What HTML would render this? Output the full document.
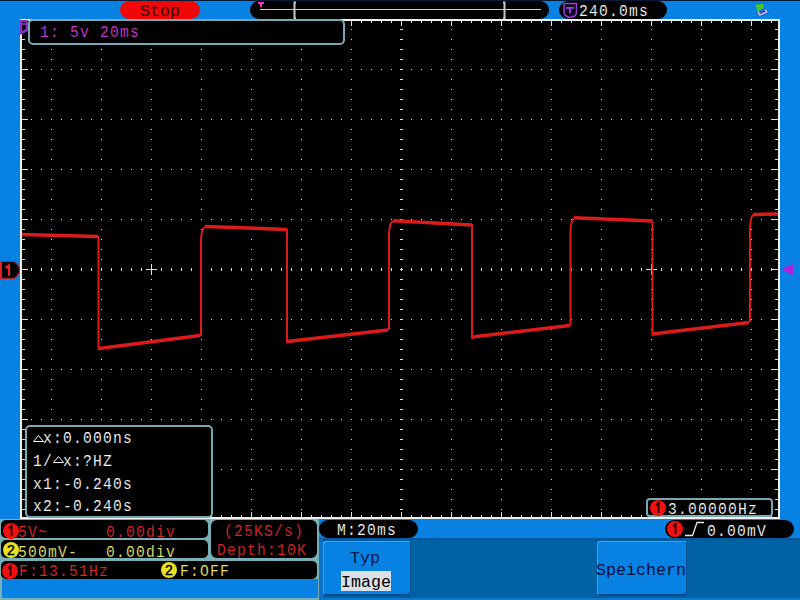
<!DOCTYPE html>
<html><head><meta charset="utf-8"><style>
html,body{margin:0;padding:0;width:800px;height:600px;overflow:hidden;background:#0882e2;}
.a{position:absolute;}
.t{position:absolute;font-family:"Liberation Mono",monospace;font-size:16.67px;line-height:20px;white-space:pre;transform:scaleX(0.88);transform-origin:0 0;letter-spacing:1.364px;}
</style></head><body>
<div class="a" style="left:0px;top:0px;width:800px;height:1px;background:#041838;"></div>
<svg width="800" height="600" style="position:absolute;left:0;top:0" shape-rendering="crispEdges"><rect x="20" y="19" width="760" height="500" fill="#000"/><g stroke="#e0e0e0" stroke-width="1" stroke-dasharray="1 9"><line x1="31" y1="69.5" x2="778" y2="69.5"/><line x1="31" y1="119.5" x2="778" y2="119.5"/><line x1="31" y1="169.5" x2="778" y2="169.5"/><line x1="31" y1="219.5" x2="778" y2="219.5"/><line x1="31" y1="319.5" x2="778" y2="319.5"/><line x1="31" y1="369.5" x2="778" y2="369.5"/><line x1="31" y1="419.5" x2="778" y2="419.5"/><line x1="31" y1="469.5" x2="778" y2="469.5"/><line x1="51.5" y1="29" x2="51.5" y2="517"/><line x1="101.5" y1="29" x2="101.5" y2="517"/><line x1="151.5" y1="29" x2="151.5" y2="517"/><line x1="201.5" y1="29" x2="201.5" y2="517"/><line x1="251.5" y1="29" x2="251.5" y2="517"/><line x1="301.5" y1="29" x2="301.5" y2="517"/><line x1="351.5" y1="29" x2="351.5" y2="517"/><line x1="451.5" y1="29" x2="451.5" y2="517"/><line x1="501.5" y1="29" x2="501.5" y2="517"/><line x1="551.5" y1="29" x2="551.5" y2="517"/><line x1="601.5" y1="29" x2="601.5" y2="517"/><line x1="651.5" y1="29" x2="651.5" y2="517"/><line x1="701.5" y1="29" x2="701.5" y2="517"/><line x1="751.5" y1="29" x2="751.5" y2="517"/></g><line x1="31" y1="269.5" x2="778" y2="269.5" stroke="#e0e0e0" stroke-width="3" stroke-dasharray="1 9"/><line x1="401.5" y1="29" x2="401.5" y2="517" stroke="#e0e0e0" stroke-width="3" stroke-dasharray="1 9"/><path fill="#e0e0e0" d="M146 269h11v1h-11z M151 264h1v11h-1z M646 269h11v1h-11z M651 264h1v11h-1z M400 269h3v1h-3z M401 268h1v3h-1z"/><path fill="#e0e0e0" d="M22 29h3v1h-3z M775 29h3v1h-3z M22 39h3v1h-3z M775 39h3v1h-3z M22 49h3v1h-3z M775 49h3v1h-3z M22 59h3v1h-3z M775 59h3v1h-3z M22 69h6v1h-6z M772 69h6v1h-6z M22 79h3v1h-3z M775 79h3v1h-3z M22 89h3v1h-3z M775 89h3v1h-3z M22 99h3v1h-3z M775 99h3v1h-3z M22 109h3v1h-3z M775 109h3v1h-3z M22 119h6v1h-6z M772 119h6v1h-6z M22 129h3v1h-3z M775 129h3v1h-3z M22 139h3v1h-3z M775 139h3v1h-3z M22 149h3v1h-3z M775 149h3v1h-3z M22 159h3v1h-3z M775 159h3v1h-3z M22 169h6v1h-6z M772 169h6v1h-6z M22 179h3v1h-3z M775 179h3v1h-3z M22 189h3v1h-3z M775 189h3v1h-3z M22 199h3v1h-3z M775 199h3v1h-3z M22 209h3v1h-3z M775 209h3v1h-3z M22 219h6v1h-6z M772 219h6v1h-6z M22 229h3v1h-3z M775 229h3v1h-3z M22 239h3v1h-3z M775 239h3v1h-3z M22 249h3v1h-3z M775 249h3v1h-3z M22 259h3v1h-3z M775 259h3v1h-3z M22 269h6v1h-6z M772 269h6v1h-6z M22 279h3v1h-3z M775 279h3v1h-3z M22 289h3v1h-3z M775 289h3v1h-3z M22 299h3v1h-3z M775 299h3v1h-3z M22 309h3v1h-3z M775 309h3v1h-3z M22 319h6v1h-6z M772 319h6v1h-6z M22 329h3v1h-3z M775 329h3v1h-3z M22 339h3v1h-3z M775 339h3v1h-3z M22 349h3v1h-3z M775 349h3v1h-3z M22 359h3v1h-3z M775 359h3v1h-3z M22 369h6v1h-6z M772 369h6v1h-6z M22 379h3v1h-3z M775 379h3v1h-3z M22 389h3v1h-3z M775 389h3v1h-3z M22 399h3v1h-3z M775 399h3v1h-3z M22 409h3v1h-3z M775 409h3v1h-3z M22 419h6v1h-6z M772 419h6v1h-6z M22 429h3v1h-3z M775 429h3v1h-3z M22 439h3v1h-3z M775 439h3v1h-3z M22 449h3v1h-3z M775 449h3v1h-3z M22 459h3v1h-3z M775 459h3v1h-3z M22 469h6v1h-6z M772 469h6v1h-6z M22 479h3v1h-3z M775 479h3v1h-3z M22 489h3v1h-3z M775 489h3v1h-3z M22 499h3v1h-3z M775 499h3v1h-3z M22 509h3v1h-3z M775 509h3v1h-3z M31 21h1v2h-1z M31 515h1v2h-1z M41 21h1v2h-1z M41 515h1v2h-1z M51 21h1v5h-1z M51 512h1v5h-1z M61 21h1v2h-1z M61 515h1v2h-1z M71 21h1v2h-1z M71 515h1v2h-1z M81 21h1v2h-1z M81 515h1v2h-1z M91 21h1v2h-1z M91 515h1v2h-1z M101 21h1v5h-1z M101 512h1v5h-1z M111 21h1v2h-1z M111 515h1v2h-1z M121 21h1v2h-1z M121 515h1v2h-1z M131 21h1v2h-1z M131 515h1v2h-1z M141 21h1v2h-1z M141 515h1v2h-1z M151 21h1v5h-1z M151 512h1v5h-1z M161 21h1v2h-1z M161 515h1v2h-1z M171 21h1v2h-1z M171 515h1v2h-1z M181 21h1v2h-1z M181 515h1v2h-1z M191 21h1v2h-1z M191 515h1v2h-1z M201 21h1v5h-1z M201 512h1v5h-1z M211 21h1v2h-1z M211 515h1v2h-1z M221 21h1v2h-1z M221 515h1v2h-1z M231 21h1v2h-1z M231 515h1v2h-1z M241 21h1v2h-1z M241 515h1v2h-1z M251 21h1v5h-1z M251 512h1v5h-1z M261 21h1v2h-1z M261 515h1v2h-1z M271 21h1v2h-1z M271 515h1v2h-1z M281 21h1v2h-1z M281 515h1v2h-1z M291 21h1v2h-1z M291 515h1v2h-1z M301 21h1v5h-1z M301 512h1v5h-1z M311 21h1v2h-1z M311 515h1v2h-1z M321 21h1v2h-1z M321 515h1v2h-1z M331 21h1v2h-1z M331 515h1v2h-1z M341 21h1v2h-1z M341 515h1v2h-1z M351 21h1v5h-1z M351 512h1v5h-1z M361 21h1v2h-1z M361 515h1v2h-1z M371 21h1v2h-1z M371 515h1v2h-1z M381 21h1v2h-1z M381 515h1v2h-1z M391 21h1v2h-1z M391 515h1v2h-1z M401 21h1v5h-1z M401 512h1v5h-1z M411 21h1v2h-1z M411 515h1v2h-1z M421 21h1v2h-1z M421 515h1v2h-1z M431 21h1v2h-1z M431 515h1v2h-1z M441 21h1v2h-1z M441 515h1v2h-1z M451 21h1v5h-1z M451 512h1v5h-1z M461 21h1v2h-1z M461 515h1v2h-1z M471 21h1v2h-1z M471 515h1v2h-1z M481 21h1v2h-1z M481 515h1v2h-1z M491 21h1v2h-1z M491 515h1v2h-1z M501 21h1v5h-1z M501 512h1v5h-1z M511 21h1v2h-1z M511 515h1v2h-1z M521 21h1v2h-1z M521 515h1v2h-1z M531 21h1v2h-1z M531 515h1v2h-1z M541 21h1v2h-1z M541 515h1v2h-1z M551 21h1v5h-1z M551 512h1v5h-1z M561 21h1v2h-1z M561 515h1v2h-1z M571 21h1v2h-1z M571 515h1v2h-1z M581 21h1v2h-1z M581 515h1v2h-1z M591 21h1v2h-1z M591 515h1v2h-1z M601 21h1v5h-1z M601 512h1v5h-1z M611 21h1v2h-1z M611 515h1v2h-1z M621 21h1v2h-1z M621 515h1v2h-1z M631 21h1v2h-1z M631 515h1v2h-1z M641 21h1v2h-1z M641 515h1v2h-1z M651 21h1v5h-1z M651 512h1v5h-1z M661 21h1v2h-1z M661 515h1v2h-1z M671 21h1v2h-1z M671 515h1v2h-1z M681 21h1v2h-1z M681 515h1v2h-1z M691 21h1v2h-1z M691 515h1v2h-1z M701 21h1v5h-1z M701 512h1v5h-1z M711 21h1v2h-1z M711 515h1v2h-1z M721 21h1v2h-1z M721 515h1v2h-1z M731 21h1v2h-1z M731 515h1v2h-1z M741 21h1v2h-1z M741 515h1v2h-1z M751 21h1v5h-1z M751 512h1v5h-1z M761 21h1v2h-1z M761 515h1v2h-1z M771 21h1v2h-1z M771 515h1v2h-1z"/><path fill="#f0f0f0" d="M20 19h760v2h-760z M20 517h760v2h-760z M20 19h2v500h-2z M778 19h2v500h-2z"/></svg><svg width="800" height="600" style="position:absolute;left:0;top:0"><clipPath id="gc"><rect x="22" y="21" width="756" height="496"/></clipPath><g clip-path="url(#gc)" fill="none" stroke="#dc1a1a"><path d="M22 234.5L98 236.5M99 348.5L200 335.5M205 226.5L287 229.5M287 341.5L388 330M393 220.7L472 225M472 337L570 325.5M574 217.8L652.5 221M652 334L749 322.5M753 214.5L778 214" stroke-width="3.5"/><path d="M98.5 236V350M287 229V343M472 224V339M652.5 221V336M201 336V240Q201.5 227 206 226.5M389 330V234Q389.5 221.5 394 220.8M570.5 325V231Q571 218.5 575 217.8M750 322V229Q750.5 215 754 214.5" stroke-width="2"/></g></svg><div class="a" style="left:120px;top:1px;width:80px;height:18px;background:#f00808;border-radius:9px;"></div>
<div class="t" style="left:140px;top:2px;color:#400000;-webkit-text-stroke:0.12px transparent;transform:none;letter-spacing:0;">Stop</div>
<div class="a" style="left:250px;top:1px;width:299px;height:18px;background:#000;border-radius:9px;"></div>
<div class="a" style="left:260px;top:9px;width:281px;height:1px;background:#d8d870;"></div>
<svg class="a" style="left:292px;top:1px" width="16" height="19"><path d="M4 1.5H2.5V17.5H4" fill="none" stroke="#c8c8c8" stroke-width="2"/></svg>
<svg class="a" style="left:500px;top:1px" width="16" height="19"><path d="M3 1.5H4.5V17.5H3" fill="none" stroke="#c8c8c8" stroke-width="2"/></svg>
<div class="a" style="left:258px;top:2px;width:6px;height:2px;background:#ff30c0;"></div>
<div class="a" style="left:260px;top:2px;width:2px;height:5px;background:#ff30c0;"></div>
<div class="a" style="left:559px;top:1px;width:108px;height:18px;background:#000;border-radius:9px;"></div>
<svg class="a" style="left:0;top:0" width="600" height="20"><path d="M564 3.5H576.5V12Q576.5 16.5 570.2 17.5Q564 16.5 564 12Z" fill="#10041c" stroke="#9040d8" stroke-width="1.5"/><path d="M566 7.8H574M570 7.5V13.5" stroke="#a040e8" stroke-width="1.8" fill="none"/></svg>
<div class="t" style="left:579px;top:2px;color:#f4f4f4;-webkit-text-stroke:0.12px #000;">240.0ms</div>
<svg class="a" style="left:0;top:0" width="800" height="20"><path d="M755.5 5.5Q757.5 3 759.8 4.6Q762 3 764 4.8L763.2 8.2Q761 9.3 759.6 10L759.4 12.6L757.6 12.2L756.8 8.6Z" fill="#48c828"/><path d="M757.8 11.8L759.8 15.6L767.2 12.2L765.6 9.2" fill="none" stroke="#0850a8" stroke-width="2.6" opacity="0.6"/><path d="M758 11.8L759.8 15.2L766.8 12L765.4 9.4" fill="none" stroke="#d0c8e0" stroke-width="1.4"/><path d="M760 12.6L764.6 10.6" stroke="#5040b0" stroke-width="2"/></svg>
<svg class="a" style="left:20px;top:20px" width="9" height="16"><path d="M0 0h8v11l-8 4z" fill="#8a2cc8"/><path d="M2 2h4v7l-4 2z" fill="#100418"/><path d="M2 4h4" stroke="#c080e0" stroke-width="1"/></svg>
<div class="a" style="left:28px;top:19px;width:313px;height:22px;background:#000;border:2px solid #78a8b4;border-radius:5px;"></div>
<div class="t" style="left:40px;top:23px;color:#c83cc8;-webkit-text-stroke:0.12px #000;">1: 5v 20ms</div>
<svg class="a" style="left:0;top:0" width="22" height="300"><path d="M0.5 261.6H14Q19.6 265 19.6 270Q19.6 275 14 278.4H0.5Z" fill="#000" stroke="#b82030" stroke-width="1.2"/><path d="M0 261h2v18h-2z" fill="#e02020"/><path d="M5.5 268L9 265.5V276" fill="none" stroke="#f02020" stroke-width="2.2"/></svg>
<svg class="a" style="left:780px;top:262px" width="16" height="16"><path d="M1 7.5L13 2V13z" fill="#b020e0"/></svg>
<div class="a" style="left:25px;top:425px;width:184px;height:89px;background:#000;border:2px solid #78a8b4;border-radius:5px;"></div>
<div class="t" style="left:33px;top:429px;color:#f4f4f4;-webkit-text-stroke:0.12px #000;"> x:0.000ns</div>
<div class="t" style="left:33px;top:452px;color:#f4f4f4;-webkit-text-stroke:0.12px #000;">1/ x:?HZ</div>
<div class="t" style="left:33px;top:475px;color:#f4f4f4;-webkit-text-stroke:0.12px #000;">x1:-0.240s</div>
<div class="t" style="left:33px;top:497px;color:#f4f4f4;-webkit-text-stroke:0.12px #000;">x2:-0.240s</div>
<svg class="a" style="left:0;top:0" width="100" height="470"><path d="M33.5 441.5L38.5 435.5L43.5 441.5Z M53.5 462.5L58.5 456.5L63.5 462.5Z" fill="none" stroke="#f4f4f4" stroke-width="1"/></svg>
<div class="a" style="left:646px;top:498px;width:123px;height:15px;background:#000;border:2px solid #78a8b4;border-radius:4px;"></div>
<svg class="a" style="left:648.5px;top:498.5px" width="18" height="18"><circle cx="9" cy="9" r="8" fill="#f01010"/><path d="M7.2 6.2L9.6 4V14" fill="none" stroke="#300000" stroke-width="1.9"/></svg>
<div class="t" style="left:668px;top:500px;color:#f4f4f4;-webkit-text-stroke:0.12px #000;">3.00000Hz</div>
<div class="a" style="left:0px;top:519px;width:319px;height:81px;background:#78b0b8;"></div>
<div class="a" style="left:2px;top:579px;width:316px;height:19px;background:#0882e2;"></div>
<div class="a" style="left:1px;top:520px;width:207px;height:18px;background:#000;border-radius:5px;"></div>
<div class="a" style="left:1px;top:540px;width:207px;height:18px;background:#000;border-radius:5px;"></div>
<div class="a" style="left:1px;top:561px;width:316px;height:18px;background:#000;border-radius:5px;"></div>
<div class="a" style="left:211px;top:520px;width:106px;height:38px;background:#000;border-radius:6px;"></div>
<div class="a" style="left:319px;top:519px;width:481px;height:19px;background:#0882e2;"></div>
<div class="a" style="left:319px;top:538px;width:481px;height:62px;background:#0062a2;"></div>
<div class="a" style="left:319px;top:538px;width:481px;height:2px;background:#0858a0;"></div>
<div class="a" style="left:319px;top:539px;width:4px;height:61px;background:#0a70c8;"></div>
<div class="a" style="left:319px;top:598px;width:481px;height:2px;background:#1078c8;"></div>
<div class="a" style="left:319px;top:520px;width:99px;height:18px;background:#000;border-radius:9px;"></div>
<div class="a" style="left:665px;top:520px;width:129px;height:18px;background:#000;border-radius:9px;"></div>
<svg class="a" style="left:1.5px;top:521.5px" width="18" height="18"><circle cx="9" cy="9" r="8" fill="#f01010"/><path d="M7.2 6.2L9.6 4V14" fill="none" stroke="#300000" stroke-width="1.9"/></svg>
<svg class="a" style="left:1.5px;top:541px" width="18" height="18"><circle cx="9" cy="9" r="8" fill="#e8e020"/><text x="9" y="14" text-anchor="middle" font-family="Liberation Sans" font-size="14" fill="#000" stroke="#000" stroke-width="0.4">2</text></svg>
<svg class="a" style="left:0.5px;top:561.5px" width="18" height="18"><circle cx="9" cy="9" r="8" fill="#f01010"/><path d="M7.2 6.2L9.6 4V14" fill="none" stroke="#300000" stroke-width="1.9"/></svg>
<svg class="a" style="left:159.5px;top:561px" width="18" height="18"><circle cx="9" cy="9" r="8" fill="#e8e020"/><text x="9" y="14" text-anchor="middle" font-family="Liberation Sans" font-size="14" fill="#000" stroke="#000" stroke-width="0.4">2</text></svg>
<svg class="a" style="left:666.2px;top:519.5px" width="18" height="18"><circle cx="9" cy="9" r="8" fill="#f01010"/><path d="M7.2 6.2L9.6 4V14" fill="none" stroke="#300000" stroke-width="1.9"/></svg>
<div class="t" style="left:18px;top:523px;color:#d82828;-webkit-text-stroke:0.12px #000;">5V~</div>
<div class="t" style="left:106px;top:523px;color:#d82828;-webkit-text-stroke:0.12px #000;">0.00div</div>
<div class="t" style="left:18px;top:543px;color:#e0e070;-webkit-text-stroke:0.12px #000;">500mV-</div>
<div class="t" style="left:106px;top:543px;color:#e0e070;-webkit-text-stroke:0.12px #000;">0.00div</div>
<div class="t" style="left:19px;top:562px;color:#d82828;-webkit-text-stroke:0.12px #000;">F:13.51Hz</div>
<div class="t" style="left:180px;top:562px;color:#e0e070;-webkit-text-stroke:0.12px #000;">F:OFF</div>
<div class="t" style="left:224px;top:522px;color:#d82828;-webkit-text-stroke:0.12px #000;">(25KS/s)</div>
<div class="t" style="left:217px;top:541px;color:#d82828;-webkit-text-stroke:0.12px #000;">Depth:10K</div>
<div class="t" style="left:337px;top:521px;color:#f4f4f4;-webkit-text-stroke:0.12px #000;">M:20ms</div>
<svg class="a" style="left:684px;top:520px" width="22" height="18"><path d="M1 15.5H8.5L13 2.5H20" fill="none" stroke="#e8e8e8" stroke-width="1.3"/></svg>
<div class="t" style="left:707px;top:522px;color:#f4f4f4;-webkit-text-stroke:0.12px #000;">0.00mV</div>
<div class="a" style="left:323px;top:541px;width:88px;height:55px;background:#0882e2;border-radius:3px;box-shadow:inset 1px 1px 0 #40a0f0, inset -1px -2px 0 #064c90;"></div>
<div class="t" style="left:350px;top:549px;color:#001850;-webkit-text-stroke:0.12px transparent;transform:none;letter-spacing:0;">Typ</div>
<div class="a" style="left:341px;top:571px;width:50px;height:20px;background:#dce0e6;"></div>
<div class="t" style="left:341px;top:573px;color:#000;-webkit-text-stroke:0.12px transparent;transform:none;letter-spacing:0;">Image</div>
<div class="a" style="left:597px;top:541px;width:90px;height:55px;background:#0882e2;border-radius:3px;box-shadow:inset 1px 1px 0 #40a0f0, inset -1px -2px 0 #064c90;"></div>
<div class="t" style="left:596px;top:561px;color:#001040;-webkit-text-stroke:0.12px transparent;transform:none;letter-spacing:0;">Speichern</div>
</body></html>
